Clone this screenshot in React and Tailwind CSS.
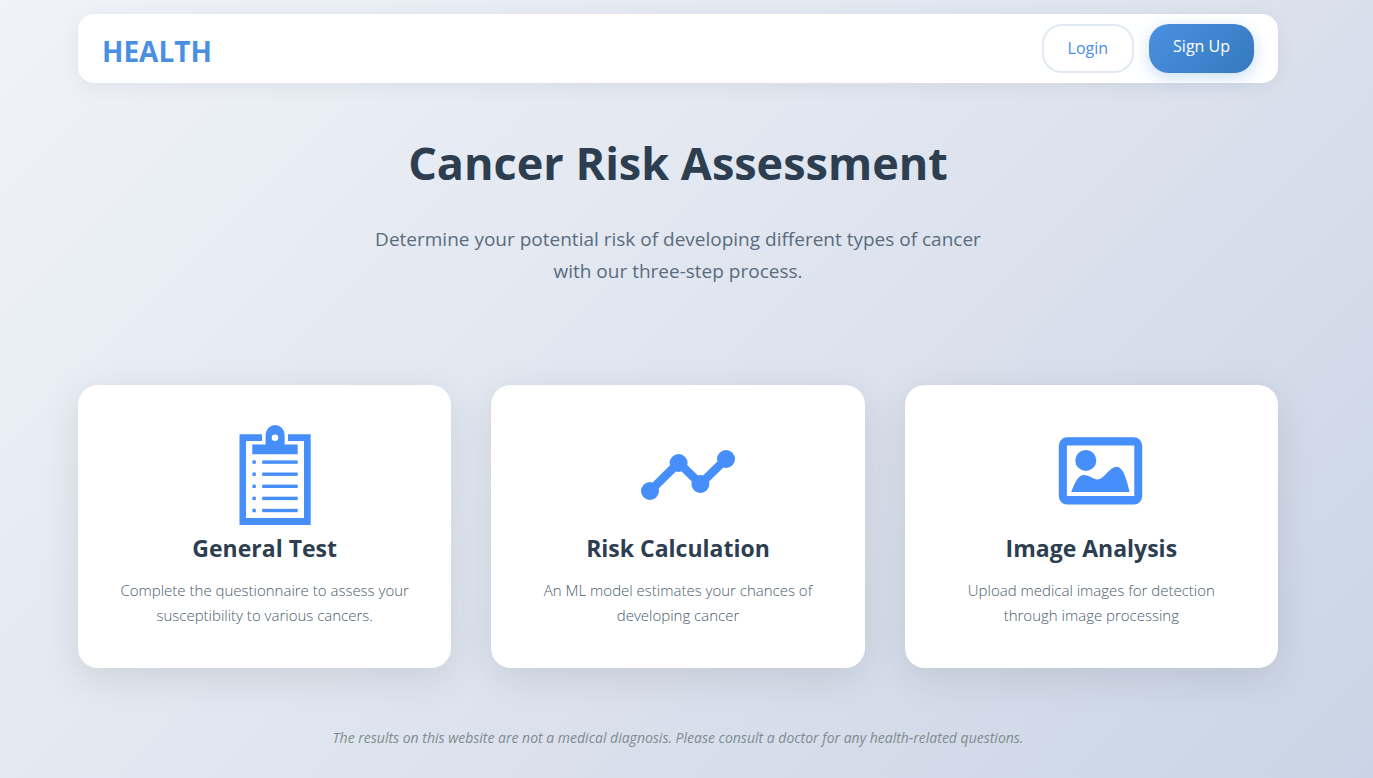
function ClipboardIcon() {
  return (
    <svg viewBox="0 0 100 100" className="size-[100px]" fill="#468ef9" aria-hidden="true">
      <path d="M14.5 9.3H37V16H21V93H79V16H63V9.3H85.7V100H14.5Z" />
      <path
        fillRule="evenodd"
        d="M27.3 19.4H40.6V9.6a9.5 9.5 0 0 1 19 0V19.4H72.7V29.3H27.3ZM50 9.4a3.3 3.3 0 1 0 0 6.6a3.3 3.3 0 1 0 0-6.6Z"
      />
      {[35.4, 47.5, 59.6, 71.7, 83.8].map((y) => (
        <g key={y}>
          <rect x="27.4" y={y} width="3.4" height="3.4" />
          <rect x="37.2" y={y} width="35.5" height="3.4" />
        </g>
      ))}
    </svg>
  );
}

function TrendIcon() {
  return (
    <svg viewBox="0 0 100 100" className="size-[100px]" fill="#468ef9" aria-hidden="true">
      <path
        d="M12 66L40.7 37.7L62.5 59L88 34"
        fill="none"
        stroke="#468ef9"
        strokeWidth="8.6"
      />
      <circle cx="12" cy="66" r="9" />
      <circle cx="40.6" cy="38" r="9" />
      <circle cx="62.4" cy="59" r="9" />
      <circle cx="88" cy="34" r="9" />
    </svg>
  );
}

function ImageIcon() {
  return (
    <svg viewBox="0 0 100 100" className="size-[100px]" fill="#468ef9" aria-hidden="true">
      <path
        fillRule="evenodd"
        d="M16.2 12.3H82.8a8.4 8.4 0 0 1 8.4 8.4V71.2a8.4 8.4 0 0 1-8.4 8.4H16.2a8.4 8.4 0 0 1-8.4-8.4V20.7a8.4 8.4 0 0 1 8.4-8.4ZM15.9 20.4V70.9H83.3V20.4Z"
      />
      <circle cx="34.8" cy="35.4" r="10.5" />
      <path d="M20.2 67C24 57 27.500 50 32.800 50C39 50 42 54.500 46.500 54.500C53 54.500 58.500 41.800 65.800 41.800C72.500 41.800 76 56 78.600 67Z" />
    </svg>
  );
}

const steps = [
  {
    title: "General Test",
    text: "Complete the questionnaire to assess your susceptibility to various cancers.",
    Icon: ClipboardIcon,
  },
  {
    title: "Risk Calculation",
    text: "An ML model estimates your chances of developing cancer",
    Icon: TrendIcon,
  },
  {
    title: "Image Analysis",
    text: "Upload medical images for detection through image processing",
    Icon: ImageIcon,
  },
];

export default function App() {
  return (
    <div className="min-h-screen bg-linear-135 from-[#f0f3f8] via-[#dfe5ef] to-[#cad4e6] pr-[17px] font-['Segoe_UI','Open_Sans',sans-serif] text-[#2c3e50]">
      <div className="mx-auto max-w-[1200px] pt-3.5 pb-6">
        <header className="flex items-center justify-between rounded-2xl bg-white px-6 py-2.5 shadow-[0_4px_20px_rgba(0,0,0,0.06)]">
          <a href="#" className="pt-1 text-[28px] leading-9 font-bold text-[#4a90e2]">
            HEALTH
          </a>
          <nav className="flex items-stretch gap-[15px] text-base leading-[21px] font-medium">
            <a href="#login" className="rounded-[20px] border-2 border-[#e1eaf3] px-6 py-3 text-[#4a90e2]">
              Login
            </a>
            <a
              href="#signup"
              className="rounded-[20px] bg-linear-135 from-[#4a90e2] to-[#357abd] px-6 py-3 text-white shadow-[0_4px_15px_rgba(74,144,226,0.3)]"
            >
              Sign Up
            </a>
          </nav>
        </header>

        <main>
          <section className="flex flex-col items-center pt-12 text-center">
            <h1 className="text-[45px] leading-[64px] font-bold">Cancer Risk Assessment</h1>
            <p className="mt-7 max-w-[620px] text-[19px] leading-8 text-[#5a6c7d]">
              Determine your potential risk of developing different types of cancer with our three-step process.
            </p>
          </section>

          <section className="mt-[98px] grid grid-cols-3 gap-10">
            {steps.map(({ title, text, Icon }) => (
              <article
                key={title}
                className="flex flex-col items-center rounded-[20px] bg-white px-9 py-10 text-center shadow-[0_10px_40px_rgba(0,0,0,0.1)]"
              >
                <div className="pl-5">
                  <Icon />
                </div>
                <h2 className="mt-[7px] text-[23px] leading-8 font-bold">{title}</h2>
                <p className="mt-3.5 text-[15px] leading-[25px] font-light text-[#4a5c6d]">{text}</p>
              </article>
            ))}
          </section>
        </main>

        <footer className="mt-[60px] text-center text-[14px] leading-5 text-[#7f8c8d] italic">
          The results on this website are not a medical diagnosis. Please consult a doctor for any health-related questions.
        </footer>
      </div>
    </div>
  );
}
